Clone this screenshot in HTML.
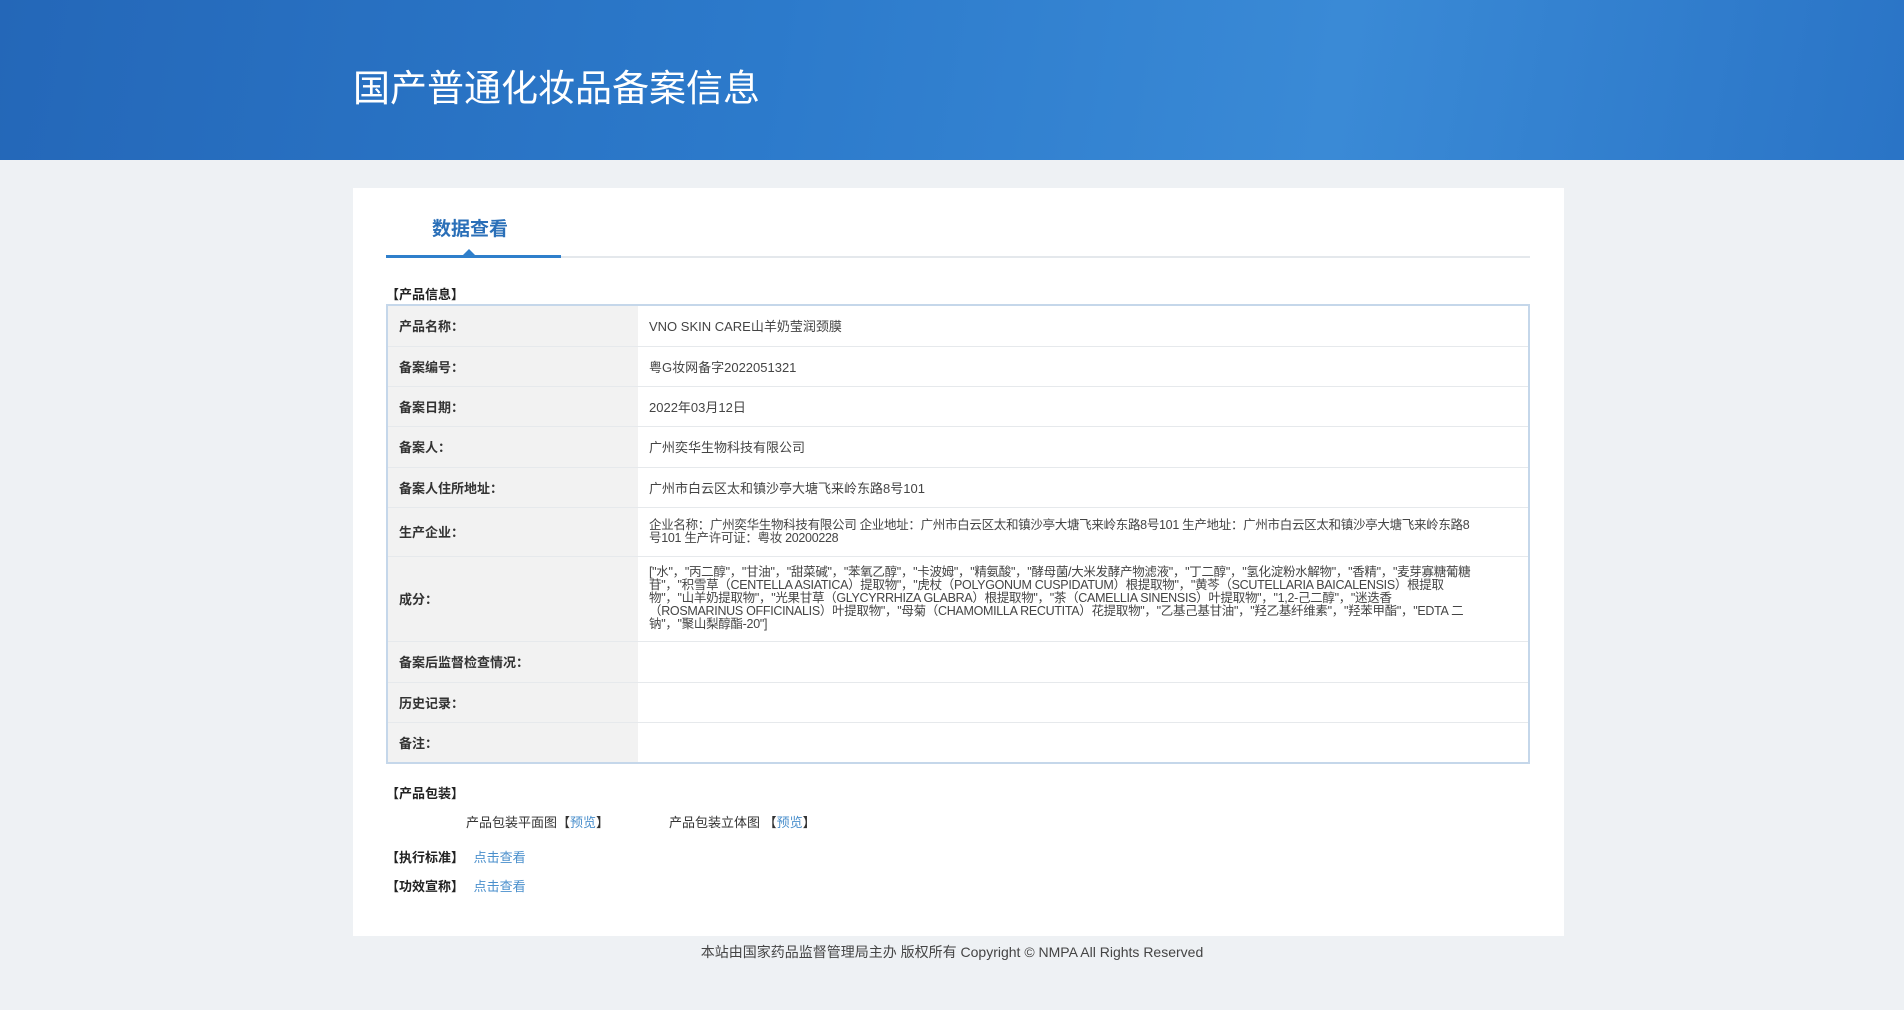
<!DOCTYPE html>
<html><head><meta charset="utf-8"><style>
*{margin:0;padding:0;box-sizing:border-box}
body{width:1904px;height:1010px;background:#eef1f4;font-family:"Liberation Sans","Noto Sans CJK SC",sans-serif;color:#333;position:relative;overflow:hidden;font-size:13px}
.hdr{position:absolute;left:0;top:0;width:1904px;height:160px;background:linear-gradient(100deg,#2467b8 0%,#2c7acb 40%,#3a8ad6 70%,#2a74c6 100%)}
.hdr h1{position:absolute;left:353px;top:58px;font-size:37px;font-weight:normal;color:#fff;letter-spacing:0px}
.card{position:absolute;left:353px;top:188px;width:1211px;height:748px;background:#fff}
.tab{position:absolute;left:432px;top:214px;font-size:19px;font-weight:bold;color:#2a6fb8}
.line{position:absolute;left:386px;top:256px;width:1144px;height:2px;background:#e4e8ec}
.bl{position:absolute;left:386px;top:255px;width:175px;height:3px;background:#2f7fcb}
.tri{position:absolute;left:463px;top:249px;width:0;height:0;border-left:6px solid transparent;border-right:6px solid transparent;border-bottom:6px solid #2f7fcb}
.sec{position:absolute;font-weight:bold;font-size:13px;color:#222}
table{position:absolute;left:386px;top:304px;width:1144px;border-collapse:collapse;border:2px solid #c5d7ea}
td{border-bottom:1px solid #e6e9ec;vertical-align:middle}
td.l{width:251px;background:#f2f2f2;font-weight:bold;padding-left:11px;color:#333}
td.v{padding-left:11px;color:#444}
.ing{font-size:12.5px;line-height:13px;width:830px;letter-spacing:-0.3px}
.a{color:#4a8fcc}
.t{position:absolute;font-size:13px;color:#333}
.foot{position:absolute;top:942px;left:0;width:1904px;text-align:center;font-size:14px;color:#444}
</style></head><body>
<div class="hdr"><h1>国产普通化妆品备案信息</h1></div>
<div class="card"></div>
<div class="tab">数据查看</div>
<div class="line"></div><div class="bl"></div><div class="tri"></div>
<div class="sec" style="left:386px;top:284px">【产品信息】</div>
<table>
<tr style="height:41px"><td class="l">产品名称：</td><td class="v">VNO SKIN CARE山羊奶莹润颈膜</td></tr>
<tr style="height:40px"><td class="l">备案编号：</td><td class="v">粤G妆网备字2022051321</td></tr>
<tr style="height:40px"><td class="l">备案日期：</td><td class="v">2022年03月12日</td></tr>
<tr style="height:41px"><td class="l">备案人：</td><td class="v">广州奕华生物科技有限公司</td></tr>
<tr style="height:40px"><td class="l">备案人住所地址：</td><td class="v">广州市白云区太和镇沙亭大塘飞来岭东路8号101</td></tr>
<tr style="height:49px"><td class="l">生产企业：</td><td class="v"><div class="ing">企业名称：广州奕华生物科技有限公司 企业地址：广州市白云区太和镇沙亭大塘飞来岭东路8号101 生产地址：广州市白云区太和镇沙亭大塘飞来岭东路8号101 生产许可证：粤妆 20200228</div></td></tr>
<tr style="height:85px"><td class="l">成分：</td><td class="v"><div class="ing">["水"，"丙二醇"，"甘油"，"甜菜碱"，"苯氧乙醇"，"卡波姆"，"精氨酸"，"酵母菌/大米发酵产物滤液"，"丁二醇"，"氢化淀粉水解物"，"香精"，"麦芽寡糖葡糖苷"，"积雪草（CENTELLA ASIATICA）提取物"，"虎杖（POLYGONUM CUSPIDATUM）根提取物"，"黄芩（SCUTELLARIA BAICALENSIS）根提取物"，"山羊奶提取物"，"光果甘草（GLYCYRRHIZA GLABRA）根提取物"，"茶（CAMELLIA SINENSIS）叶提取物"，"1,2-己二醇"，"迷迭香（ROSMARINUS OFFICINALIS）叶提取物"，"母菊（CHAMOMILLA RECUTITA）花提取物"，"乙基己基甘油"，"羟乙基纤维素"，"羟苯甲酯"，"EDTA 二钠"，"聚山梨醇酯-20"]</div></td></tr>
<tr style="height:41px"><td class="l">备案后监督检查情况：</td><td class="v"></td></tr>
<tr style="height:40px"><td class="l">历史记录：</td><td class="v"></td></tr>
<tr style="height:41px"><td class="l">备注：</td><td class="v"></td></tr>
</table>
<div class="sec" style="left:386px;top:783px">【产品包装】</div>
<div class="t" style="left:466px;top:812px">产品包装平面图【<span class="a">预览</span>】</div>
<div class="t" style="left:669px;top:812px">产品包装立体图 【<span class="a">预览</span>】</div>
<div class="sec" style="left:386px;top:847px">【执行标准】 <span class="a" style="font-weight:normal;margin-left:6px">点击查看</span></div>
<div class="sec" style="left:386px;top:876px">【功效宣称】 <span class="a" style="font-weight:normal;margin-left:6px">点击查看</span></div>
<div class="foot">本站由国家药品监督管理局主办 版权所有 Copyright © NMPA All Rights Reserved</div>
</body></html>
